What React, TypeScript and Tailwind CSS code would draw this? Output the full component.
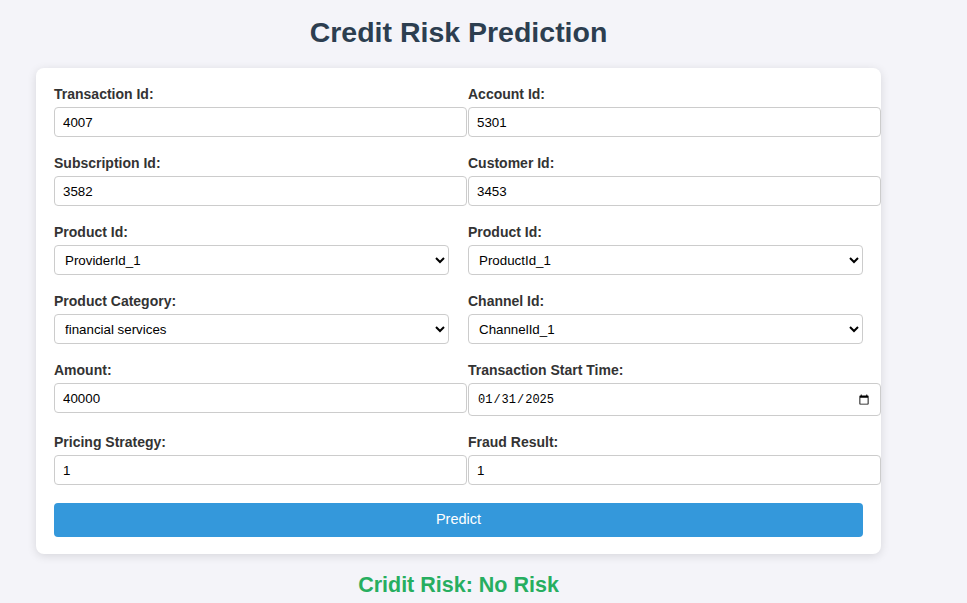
import React from 'react';

const inputCls =
  'block h-[30px] w-[calc(100%+18px)] px-[8px] border border-[#cccccc] rounded-[4px] bg-white text-[13.33px] text-black outline-none';
const selectCls =
  'block h-[30px] w-full pl-[6px] pr-[4px] border border-[#cccccc] rounded-[4px] bg-white text-[13.33px] text-black outline-none';

const Field: React.FC<{ label: string; children: React.ReactNode }> = ({ label, children }) => (
  <div>
    <label className="block mb-[5px] text-[14px] leading-[16px] font-bold text-[#333333]">{label}</label>
    {children}
  </div>
);

export default function App() {
  return (
    <div className="min-h-[603px] bg-[#f4f4f9] pt-[16px] font-['Liberation_Sans',Arial,sans-serif]">
      <div className="ml-[36px] w-[845px]">
        <h1 className="text-center text-[28.5px] leading-[32px] font-bold text-[#2c3e50]">Credit Risk Prediction</h1>

        <form
          className="mt-[20px] bg-white rounded-[8px] px-[18px] pt-[18px] pb-[17px] shadow-[0_2px_10px_rgba(0,0,0,0.12)]"
          onSubmit={(e) => e.preventDefault()}
        >
          <div className="grid grid-cols-2 gap-x-[19px] gap-y-[18px]">
            <Field label="Transaction Id:">
              <input className={inputCls} type="text" defaultValue="4007" />
            </Field>
            <Field label="Account Id:">
              <input className={inputCls} type="text" defaultValue="5301" />
            </Field>
            <Field label="Subscription Id:">
              <input className={inputCls} type="text" defaultValue="3582" />
            </Field>
            <Field label="Customer Id:">
              <input className={inputCls} type="text" defaultValue="3453" />
            </Field>
            <Field label="Product Id:">
              <select className={selectCls} defaultValue="ProviderId_1">
                <option>ProviderId_1</option>
                <option>ProviderId_2</option>
              </select>
            </Field>
            <Field label="Product Id:">
              <select className={selectCls} defaultValue="ProductId_1">
                <option>ProductId_1</option>
                <option>ProductId_2</option>
              </select>
            </Field>
            <Field label="Product Category:">
              <select className={selectCls} defaultValue="financial services">
                <option>financial services</option>
                <option>airtime</option>
              </select>
            </Field>
            <Field label="Channel Id:">
              <select className={selectCls} defaultValue="ChannelId_1">
                <option>ChannelId_1</option>
                <option>ChannelId_2</option>
              </select>
            </Field>
            <Field label="Amount:">
              <input className={inputCls} type="text" defaultValue="40000" />
            </Field>
            <Field label="Transaction Start Time:">
              <input
                className="block h-[33px] w-[calc(100%+18px)] px-[8px] border border-[#cccccc] rounded-[4px] bg-white text-[12px] text-black outline-none font-['Liberation_Mono',monospace]"
                type="date"
                defaultValue="2025-01-31"
              />
            </Field>
            <Field label="Pricing Strategy:">
              <input className={inputCls} type="text" defaultValue="1" />
            </Field>
            <Field label="Fraud Result:">
              <input className={inputCls} type="text" defaultValue="1" />
            </Field>
          </div>

          <button
            type="submit"
            className="mt-[18px] block w-full h-[34px] rounded-[4px] bg-[#3498db] text-white text-[14.5px]"
          >
            Predict
          </button>
        </form>

        <h3 className="mt-[19px] text-center text-[21.5px] leading-[25px] font-bold text-[#27ae60]">Cridit Risk: No Risk</h3>
      </div>
    </div>
  );
}
